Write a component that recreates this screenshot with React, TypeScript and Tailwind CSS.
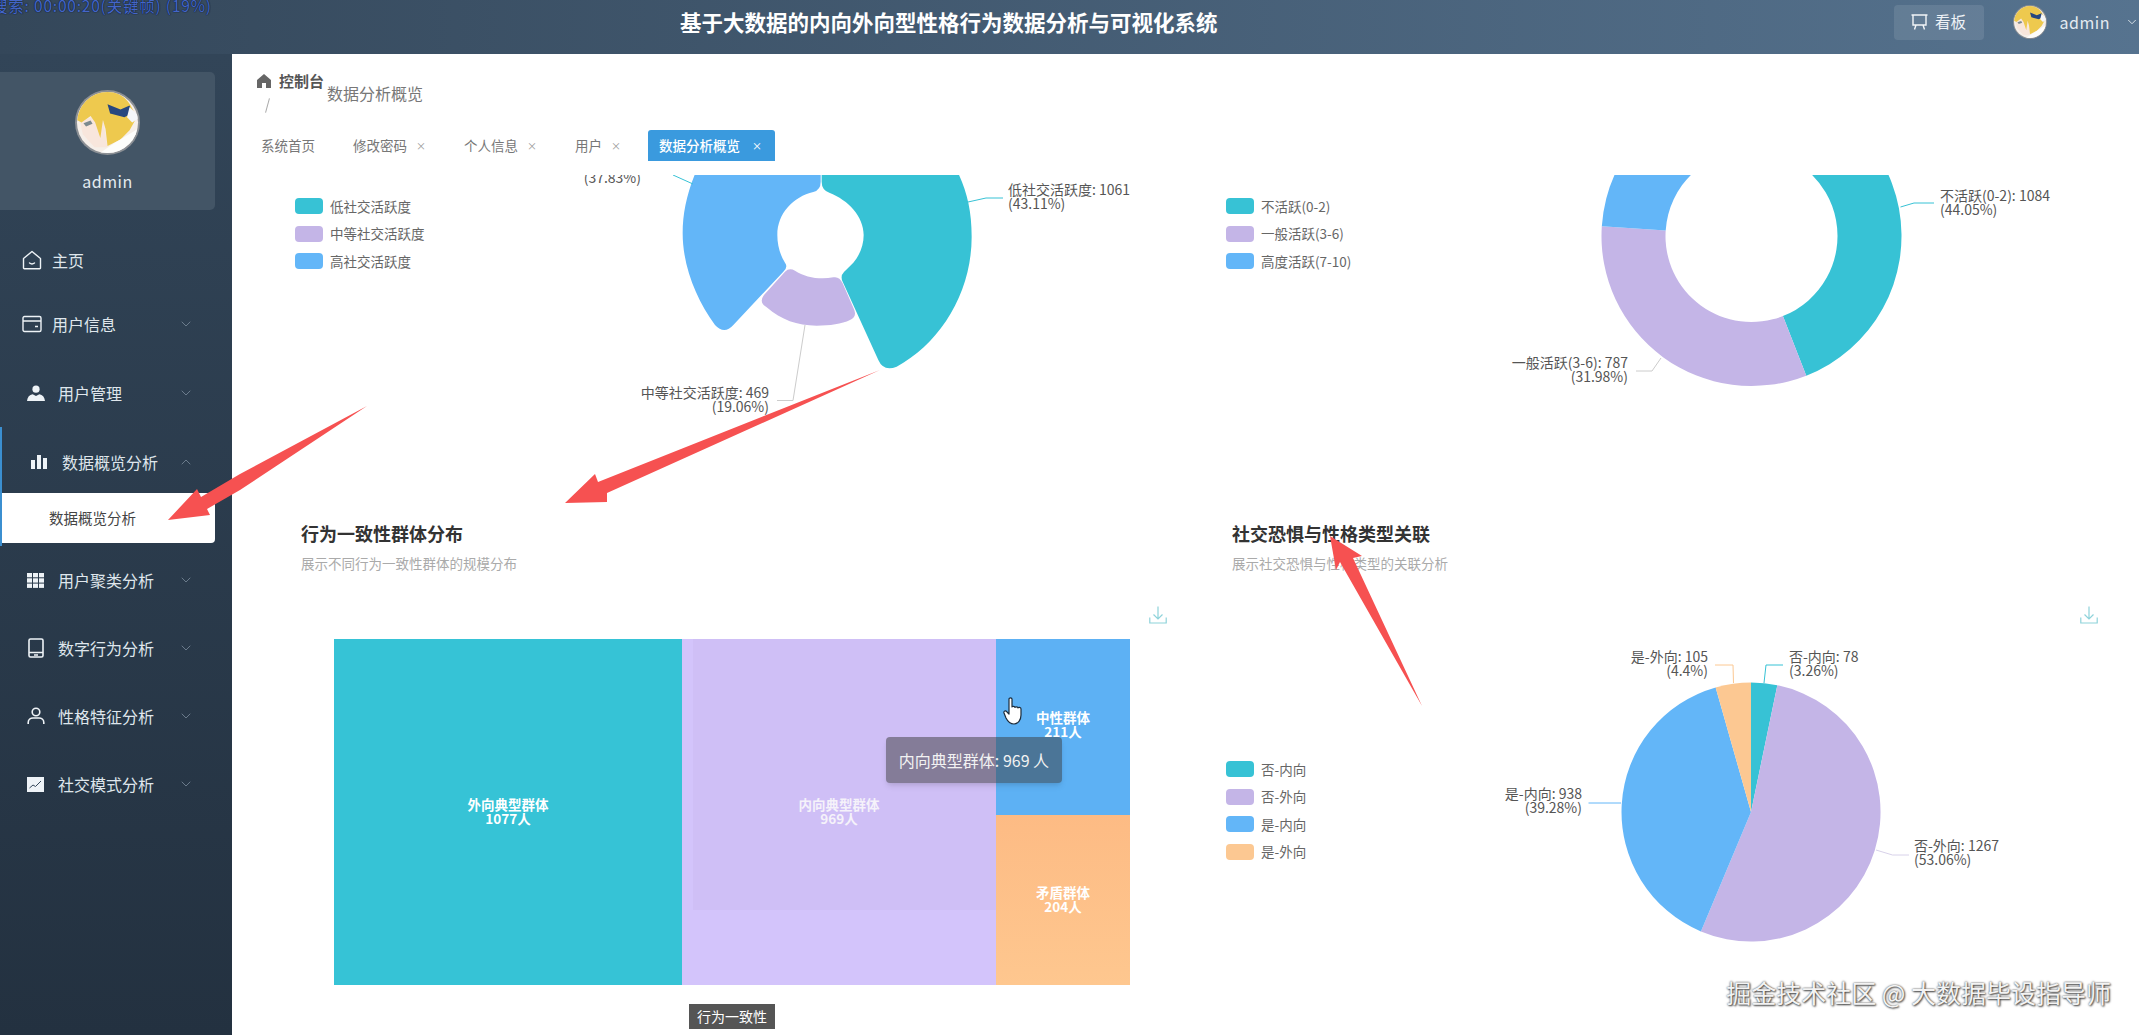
import { ChevronDown, ChevronUp } from 'lucide-react';
import type { ReactNode } from 'react';

const TEAL = '#37c2d5';
const LAVENDER = '#c4b5e7';
const BLUE = '#63b6f8';
const PEACH = '#fcc892';

// clockwise from 12 o'clock, a0/a1 as fractions of the circle
function slice(cx: number, cy: number, r0: number, r1: number, a0: number, a1: number) {
  const pt = (r: number, a: number) => {
    const t = a * Math.PI * 2;
    return `${(cx + r * Math.sin(t)).toFixed(2)} ${(cy - r * Math.cos(t)).toFixed(2)}`;
  };
  const large = a1 - a0 > 0.5 ? 1 : 0;
  if (r0 === 0) return `M${cx} ${cy} L${pt(r1, a0)} A${r1} ${r1} 0 ${large} 1 ${pt(r1, a1)} Z`;
  return `M${pt(r1, a0)} A${r1} ${r1} 0 ${large} 1 ${pt(r1, a1)} L${pt(r0, a1)} A${r0} ${r0} 0 ${large} 0 ${pt(r0, a0)} Z`;
}

function Avatar({ className }: { className: string }) {
  return (
    <svg viewBox="0 0 100 100" className={className}>
      <defs>
        <clipPath id="avatar-clip">
          <circle cx="50" cy="50" r="47" />
        </clipPath>
      </defs>
      <circle cx="50" cy="50" r="50" fill="#8b8f94" />
      <g clipPath="url(#avatar-clip)">
        <rect width="100" height="100" fill="#f6efe9" />
        <path d="M8 50 L24 42 L44 50 L50 88 L30 88 L12 68 Z" fill="#f8e6dc" />
        <path d="M3 46 C8 15 30 2 50 2 C72 2 88 20 94 44 L84 62 L70 76 L50 86 L47 60 L43 46 L39 74 L31 50 L24 40 L10 50 Z" fill="#eec94e" />
        <path d="M13 51 L24 47 L27 52 L17 56 Z" fill="#7c8a8f" />
        <path d="M50 22 L70 30 L84 24 L87 36 L76 42 L54 36 Z" fill="#27477f" />
        <path d="M84 26 L100 42 L88 50 L80 42 Z" fill="#f4f6fa" />
        <path d="M34 100 L60 82 L100 58 L100 100 Z" fill="#fdfdfb" />
      </g>
    </svg>
  );
}

const icons: Record<string, ReactNode> = {
  home: (
    <svg viewBox="0 0 20 20" className="h-5 w-5" fill="none" stroke="#eef3f7" strokeWidth="1.4">
      <path d="M1.5 8.500 10 1.500l8.500 7V18a.8.8 0 0 1-.8.8H2.300a.8.8 0 0 1-.8-.8Z" strokeLinejoin="round" />
      <path d="M7.500 13c1.300 1 3.700 1 5 0" strokeLinecap="round" />
    </svg>
  ),
  card: (
    <svg viewBox="0 0 20 18" className="h-[18px] w-5" fill="none" stroke="#eef3f7" strokeWidth="1.4">
      <rect x="1" y="1.500" width="18" height="15" rx="1.500" />
      <path d="M1 6h18M13 11.500h3" />
    </svg>
  ),
  user: (
    <svg viewBox="0 0 18 16" className="h-4 w-[18px]" fill="#eef3f7">
      <circle cx="9" cy="4.200" r="3.600" />
      <path d="M0 16c.3-4 2.600-6.200 5.600-6.800L9 11l3.400-1.800c3 .6 5.300 2.800 5.600 6.800Z" />
    </svg>
  ),
  bars: (
    <svg viewBox="0 0 16 14" className="h-[14px] w-4" fill="#eef3f7">
      <rect x="0" y="5" width="4" height="9" />
      <rect x="6" y="0" width="4" height="14" />
      <rect x="12" y="3" width="4" height="11" />
    </svg>
  ),
  grid: (
    <svg viewBox="0 0 17 15" className="h-[15px] w-[17px]" fill="#eef3f7">
      <rect x="0" y="0" width="5" height="4.300" />
      <rect x="6" y="0" width="5" height="4.300" />
      <rect x="12" y="0" width="5" height="4.300" />
      <rect x="0" y="5.300" width="5" height="4.300" />
      <rect x="6" y="5.300" width="5" height="4.300" />
      <rect x="12" y="5.300" width="5" height="4.300" />
      <rect x="0" y="10.600" width="5" height="4.300" />
      <rect x="6" y="10.600" width="5" height="4.300" />
      <rect x="12" y="10.600" width="5" height="4.300" />
    </svg>
  ),
  tablet: (
    <svg viewBox="0 0 16 20" className="h-5 w-4" fill="none" stroke="#eef3f7" strokeWidth="1.6">
      <rect x="1" y="1" width="14" height="18" rx="1.500" />
      <path d="M1 14.500h14M6 17h4" />
    </svg>
  ),
  person: (
    <svg viewBox="0 0 18 18" className="h-[18px] w-[18px]" fill="none" stroke="#eef3f7" strokeWidth="1.6">
      <circle cx="9" cy="5" r="3.800" />
      <path d="M1.200 17v-1.500C1.200 12.500 3.600 11 6 11h6c2.400 0 4.800 1.500 4.800 4.500V17" />
    </svg>
  ),
  chart: (
    <svg viewBox="0 0 17 15" className="h-[15px] w-[17px]">
      <rect width="17" height="15" fill="#eef3f7" />
      <path d="M2.500 11 6 8l2.500 1.500L14 4" fill="none" stroke="#34475a" strokeWidth="1" />
    </svg>
  ),
};

const menu = [
  { label: '主页', icon: 'home', iconBox: 'w-[52px] pl-[22px]', h: 'h-[64px]', arrow: false },
  { label: '用户信息', icon: 'card', iconBox: 'w-[52px] pl-[22px]', h: 'h-[64px]', arrow: true },
  { label: '用户管理', icon: 'user', iconBox: 'w-[58px] pl-[27px]', h: 'mt-[3px] h-[68px]', arrow: true },
  { label: '数据概览分析', icon: 'bars', iconBox: 'w-[62px] pl-[31px]', h: 'mt-[1px] h-[68px]', arrow: true, open: true },
  { label: '用户聚类分析', icon: 'grid', iconBox: 'w-[58px] pl-[27px]', h: 'h-[68px]', arrow: true },
  { label: '数字行为分析', icon: 'tablet', iconBox: 'w-[58px] pl-[28px]', h: 'h-[68px]', arrow: true },
  { label: '性格特征分析', icon: 'person', iconBox: 'w-[58px] pl-[27px]', h: 'h-[68px]', arrow: true },
  { label: '社交模式分析', icon: 'chart', iconBox: 'w-[58px] pl-[27px]', h: 'h-[68px]', arrow: true },
];

const tabs = ['修改密码', '个人信息', '用户'];

function Legend({ items, className }: { items: { name: string; color: string }[]; className: string }) {
  return (
    <div className={`flex shrink-0 flex-col gap-[11.5px] ${className}`}>
      {items.map((item) => (
        <div key={item.name} className="flex h-4 items-center gap-[7px] text-[13.5px] text-[#666]">
          <span className="h-4 w-7 rounded-[4px]" style={{ backgroundColor: item.color }} />
          {item.name}
        </div>
      ))}
    </div>
  );
}

// pie label: two lines, anchored on one side
function Label({ x, y, lines, end }: { x: number; y: number; lines: string[]; end?: boolean }) {
  return (
    <text fontSize="14" fill="#555" textAnchor={end ? 'end' : 'start'}>
      {lines.map((line, i) => (
        <tspan key={line} x={x} y={y + i * 14}>
          {line}
        </tspan>
      ))}
    </text>
  );
}

function Download() {
  return (
    <svg viewBox="0 0 18 18" className="h-[18px] w-[18px]" fill="none" stroke="#8ed3da" strokeWidth="1.2">
      <path d="M9 0.500V12.500M4.500 8.500 9 13l4.500-4.500M0.800 11.500V17h16.400v-5.500" />
    </svg>
  );
}

function Tile({ label, count, className }: { label: string; count: string; className: string }) {
  return (
    <div className={`flex flex-col items-center justify-center text-[13.5px] leading-[14px] font-bold text-white ${className}`}>
      <span>{label}</span>
      <span>{count}</span>
    </div>
  );
}

export default function App() {
  return (
    <div className="relative flex h-[1035px] w-[2139px] flex-col overflow-hidden bg-white font-['Noto_Sans_CJK_SC',sans-serif]">
      <header className="flex h-[54px] shrink-0 items-start bg-gradient-to-r from-[#34475a] to-[#56738f] text-white">
        <div className="flex h-[44px] w-full items-center pl-[680px]">
          <h1 className="text-[21.5px] font-bold whitespace-nowrap">基于大数据的内向外向型性格行为数据分析与可视化系统</h1>
          <div className="ml-auto flex items-center">
            <button className="flex h-[35px] w-[90px] items-center justify-center gap-[7px] rounded-[4px] bg-white/10 text-[15.5px] text-[#eef2f6]">
              <svg viewBox="0 0 17 16" className="h-4 w-[17px]" fill="none" stroke="#f2f5f8" strokeWidth="1.4">
                <path d="M0.500 1h16M2 1v10h13V1M5 11l-1.500 4.500M12 11l1.500 4.500" />
              </svg>
              看板
            </button>
            <Avatar className="ml-[29px] h-[34px] w-[34px]" />
            <span className="ml-[13px] text-[16px] tracking-[0.5px] text-[#e4ebf1]">admin</span>
            <ChevronDown className="ml-[15px] h-[14px] w-[14px] text-[#e4ebf1]" strokeWidth={1.5} />
          </div>
        </div>
      </header>

      <div className="flex min-h-0 flex-1">
        <aside className="flex w-[232px] shrink-0 flex-col bg-gradient-to-b from-[#324558] to-[#233140] pt-[18px]">
          <div className="flex h-[138px] w-[215px] flex-col items-center rounded-r-[5px] bg-[#435566] pt-[18px]">
            <Avatar className="h-[65px] w-[65px]" />
            <span className="mt-[14px] text-[16px] tracking-[0.5px] text-[#e4ebf1]">admin</span>
          </div>
          <nav className="mt-[18px] flex flex-col">
            {menu.map((item) => (
              <div key={item.label} className={item.open ? 'border-l-2 border-[#3b8fd0]' : ''}>
                <div className={`flex items-center text-[16px] text-[#dfe6ec] ${item.h}`}>
                  <span className={`flex shrink-0 items-center ${item.open ? 'ml-[-2px]' : ''} ${item.iconBox}`}>{icons[item.icon]}</span>
                  <span>{item.label}</span>
                  {item.arrow &&
                    (item.open ? (
                      <ChevronUp className="absolute left-[178px] h-4 w-4 text-[#7b8c9c]" strokeWidth={1.2} />
                    ) : (
                      <ChevronDown className="absolute left-[178px] h-4 w-4 text-[#7b8c9c]" strokeWidth={1.2} />
                    ))}
                </div>
                {item.open && (
                  <div className="mt-[-3px] mb-[3px] flex h-[50px] w-[213px] items-center rounded-br-[4px] bg-white pl-[47px] text-[14.5px] text-[#444]">
                    数据概览分析
                  </div>
                )}
              </div>
            ))}
          </nav>
        </aside>

        <main className="flex min-w-0 flex-1 flex-col">
          <div className="flex h-[76px] shrink-0 items-start pt-[16px] pl-[25px]">
            <div className="flex w-[70px] flex-col">
              <div className="flex h-[22px] items-center gap-2 text-[15px] font-bold whitespace-nowrap text-[#555]">
                <svg viewBox="0 0 14 14" className="h-[14px] w-[14px] shrink-0" fill="#666">
                  <path d="M7 0 14 6v8H9V9H5v5H0V6Z" />
                </svg>
                控制台
              </div>
              <span className="mt-[6px] ml-[10px] h-[15px] w-px rotate-[15deg] bg-[#aaa]" />
            </div>
            <span className="mt-[12px] text-[16px] leading-[22px] text-[#777]">数据分析概览</span>
          </div>

          <div className="flex h-[31px] shrink-0 items-center gap-[15px] pl-[18px] text-[13.5px] text-[#777]">
            <div className="px-[11px]">系统首页</div>
            <div className="ml-px flex gap-[17px]">
              {tabs.map((tab) => (
                <div key={tab} className="flex items-center gap-[9px] px-[11px]">
                  {tab}
                  <span className="w-[9px] text-center text-[10px] leading-none text-[#999]">×</span>
                </div>
              ))}
            </div>
            <div className="ml-[2px] flex h-full items-center gap-3 rounded-t-[3px] bg-[#3a9ade] pr-[14px] pl-[11px] font-medium text-white">
              数据分析概览
              <span className="w-[9px] text-center text-[10px] leading-none">×</span>
            </div>
          </div>

          <div className="mt-[14px] grid min-h-0 flex-1 grid-cols-[931px_931px] grid-rows-[335px_525px] overflow-hidden">
            <section className="flex">
              <Legend
                className="w-[300px] pt-[23px] pl-[63px]"
                items={[
                  { name: '低社交活跃度', color: TEAL },
                  { name: '中等社交活跃度', color: LAVENDER },
                  { name: '高社交活跃度', color: BLUE },
                ]}
              />
              <svg viewBox="532 175 631 335" className="h-[335px] w-[631px]">
                <g transform="translate(670 170) scale(0.33333)">
                  <path d="M80 0 C50 70 38 130 38 190 C38 290 80 390 135 465 Q163 495 190 465 L340 305 Q355 292 345 278 C330 255 322 225 322 195 C322 130 370 80 430 66 Q452 60 452 35 L452 0 Z" fill={BLUE} />
                  <path d="M455 0 L455 35 Q455 60 478 68 C535 90 581 140 581 195 C581 225 570 255 550 278 L522 306 Q510 318 518 335 L625 570 Q640 605 680 590 C810 520 905 370 905 200 C905 120 890 60 860 0 Z" fill={TEAL} />
                  <path d="M345 305 L282 375 Q265 398 290 412 C335 450 380 467 440 467 C480 467 515 462 540 450 Q562 440 552 418 L518 340 Q508 318 490 322 C450 330 405 322 375 302 Q358 292 345 305 Z" fill={LAVENDER} />
                </g>
                <path d="M968 202 986 198H1003" fill="none" stroke={TEAL} />
                <path d="M673 175 693 184" fill="none" stroke={TEAL} />
                <path d="M805 325 793 400.500H777" fill="none" stroke="#ccc" />
                <Label x={1008} y={195} lines={['低社交活跃度: 1061', '(43.11%)']} />
                <Label x={641} y={183} end lines={['(37.83%)']} />
                <Label x={769} y={398} end lines={['中等社交活跃度: 469', '(19.06%)']} />
              </svg>
            </section>

            <section className="flex">
              <Legend
                className="w-[300px] pt-[23px] pl-[63px]"
                items={[
                  { name: '不活跃(0-2)', color: TEAL },
                  { name: '一般活跃(3-6)', color: LAVENDER },
                  { name: '高度活跃(7-10)', color: BLUE },
                ]}
              />
              <svg viewBox="1463 175 631 335" className="h-[335px] w-[631px]">
                <path d={slice(1751.5, 236, 86, 150, 0, 0.4405)} fill={TEAL} />
                <path d={slice(1751.5, 236, 86, 150, 0.4405, 0.7603)} fill={LAVENDER} />
                <path d={slice(1751.5, 236, 86, 150, 0.7603, 1)} fill={BLUE} />
                <path d="M1900.500 207 1914 203H1934" fill="none" stroke={TEAL} />
                <path d="M1661 358 1652 371H1636" fill="none" stroke="#ccc" />
                <Label x={1940} y={201} lines={['不活跃(0-2): 1084', '(44.05%)']} />
                <Label x={1628} y={368} end lines={['一般活跃(3-6): 787', '(31.98%)']} />
              </svg>
            </section>

            <section className="flex flex-col pt-[11px] pl-[69px]">
              <h2 className="text-[18px] leading-6 font-bold text-[#333]">行为一致性群体分布</h2>
              <p className="mt-[8px] text-[13.5px] leading-5 text-[#aaa]">展示不同行为一致性群体的规模分布</p>
              <div className="mt-[33px] mr-[-4px] flex justify-end">
                <Download />
              </div>
              <div className="mt-[15px] ml-[33px] flex w-[796px] flex-col items-start">
                <div className="relative flex h-[346px] w-[796px]">
                  <Tile label="外向典型群体" count="1077人" className="w-[348px] bg-[#36c3d6] pb-[2px]" />
                  <div className="relative flex w-[314px]">
                    <Tile label="内向典型群体" count="969人" className="w-full bg-[#d3c4fb] pb-[2px]" />
                    <div className="absolute top-0 right-0 left-[11px] h-[271px] bg-[#b9a8e0]/15" />
                  </div>
                  <div className="flex w-[134px] flex-col">
                    <Tile label="中性群体" count="211人" className="h-[176px] bg-[#5db1f4] pb-[6px]" />
                    <Tile label="矛盾群体" count="204人" className="h-[170px] bg-gradient-to-b from-[#fdbb84] to-[#fec78f] pb-[2px]" />
                  </div>
                  <div className="absolute top-[98px] left-[552px] flex h-[46px] w-[176px] items-center justify-center rounded-[4px] bg-[#3a3a3a]/50 text-[16px] whitespace-nowrap text-[#f2f2f2] shadow-md">
                    内向典型群体: 969 人
                  </div>
                  <svg viewBox="0 0 20 28" className="absolute top-[58px] left-[669px] h-[28px] w-[20px]" fill="#fff" stroke="#1c2b3a" strokeWidth="1.2">
                    <path d="M6 2C6 .6 9 .6 9 2v8c0-1 3-1 3 .5 0-1 3-1 3 .5 0-1 3-1 3 1v6c0 5-3 9-7 9-4 0-6-2-8-6l-2-5c-.5-2 1.500-3 3-1l2 2Z" strokeLinejoin="round" />
                  </svg>
                </div>
                <div className="mt-[19px] ml-[355px] flex h-[25px] w-[86px] items-center justify-center bg-[#555] text-[14px] text-white">
                  行为一致性
                </div>
              </div>
            </section>

            <section className="flex flex-col pt-[11px] pl-[69px]">
              <h2 className="text-[18px] leading-6 font-bold text-[#333]">社交恐惧与性格类型关联</h2>
              <p className="mt-[8px] text-[13.5px] leading-5 text-[#aaa]">展示社交恐惧与性格类型的关联分析</p>
              <div className="mt-[33px] mr-[-4px] flex justify-end">
                <Download />
              </div>
              <div className="mt-[6px] ml-[-69px] flex">
                <Legend
                  className="w-[300px] pt-[131px] pl-[63px]"
                  items={[
                    { name: '否-内向', color: TEAL },
                    { name: '否-外向', color: LAVENDER },
                    { name: '是-内向', color: BLUE },
                    { name: '是-外向', color: PEACH },
                  ]}
                />
                <svg viewBox="1463 630 631 405" className="h-[405px] w-[631px]">
                  <path d={slice(1751, 812, 0, 129.5, 0, 0.0326)} fill={TEAL} />
                  <path d={slice(1751, 812, 0, 129.5, 0.0326, 0.5632)} fill={LAVENDER} />
                  <path d={slice(1751, 812, 0, 129.5, 0.5632, 0.956)} fill={BLUE} />
                  <path d={slice(1751, 812, 0, 129.5, 0.956, 1)} fill={PEACH} />
                  <path d="M1764 683 1766 665H1783" fill="none" stroke={TEAL} />
                  <path d="M1733.500 683 1733 665H1715" fill="none" stroke={PEACH} />
                  <path d="M1876 850 1892.500 855H1909" fill="none" stroke="#d8d2ea" />
                  <path d="M1621 803H1588.500" fill="none" stroke={BLUE} />
                  <Label x={1789} y={662} lines={['否-内向: 78', '(3.26%)']} />
                  <Label x={1708} y={662} end lines={['是-外向: 105', '(4.4%)']} />
                  <Label x={1914} y={851} lines={['否-外向: 1267', '(53.06%)']} />
                  <Label x={1582} y={799} end lines={['是-内向: 938', '(39.28%)']} />
                </svg>
              </div>
            </section>
          </div>
        </main>
      </div>

      {/* screen recorder text burned into the video */}
      <div className="absolute top-[-5px] left-[-8px] text-[15.5px] leading-5 tracking-[0.8px] whitespace-nowrap text-[#4566c8] [text-shadow:0_0_1px_#0c1a30,0_0_1px_#0c1a30]">
        搜索: 00:00:20(关键帧) (19%)
      </div>

      {/* hand drawn red arrows */}
      <svg viewBox="0 0 2139 1035" className="pointer-events-none absolute inset-0 h-[1035px] w-[2139px]" fill="#f65151">
        <polygon points="367,406 240,474 201,497 197,489 168,520 210,515 207,509 240,490" />
        <polygon points="880,370 598,482 595,474 565,503 607,502 607,493" />
        <polygon points="1422,706 1340,562 1336,570 1330,536 1362,556 1353,558" />
      </svg>

      <div className="absolute top-[975px] right-[28px] text-[25px] leading-[34px] whitespace-nowrap text-[#f3f3f3] [text-shadow:0_0_2px_#444,1px_1px_2px_#444]">
        掘金技术社区 @ 大数据毕设指导师
      </div>
    </div>
  );
}
